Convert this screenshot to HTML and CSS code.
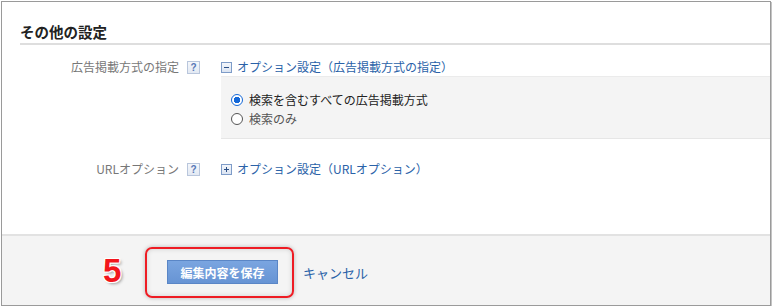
FILE: index.html
```html
<!DOCTYPE html>
<html lang="ja">
  <head>
    <meta charset="UTF-8" />
    <meta name="viewport" content="width=device-width, initial-scale=1.0" />
    <title>その他の設定</title>
    <link rel="stylesheet" href="styles.css">
  </head>
  <body>
    <div class="frame">
      <div class="section">
        <h2 class="section-title">その他の設定</h2>

        <div class="setting-row first">
          <div class="setting-label">
            <span>広告掲載方式の指定</span>
            <span class="help">?</span>
          </div>
          <div class="setting-body">
            <a class="toggle-link" href="#"><span class="toggle minus"></span>オプション設定（広告掲載方式の指定）</a>
            <div class="option-box">
              <label class="radio-line checked"><span class="radio"></span>検索を含むすべての広告掲載方式</label>
              <label class="radio-line"><span class="radio"></span>検索のみ</label>
            </div>
          </div>
        </div>

        <div class="setting-row second">
          <div class="setting-label">
            <span>URLオプション</span>
            <span class="help">?</span>
          </div>
          <div class="setting-body">
            <a class="toggle-link" href="#"><span class="toggle plus"></span>オプション設定（URLオプション）</a>
          </div>
        </div>
      </div>

      <div class="footer">
        <span class="step-number">5</span>
        <div class="highlight">
          <button class="save-button">編集内容を保存</button>
        </div>
        <a class="cancel-link" href="#">キャンセル</a>
      </div>
    </div>
  </body>
</html>
```

FILE: styles.css
```css
/* General Page Styling */
body {
  margin: 0;
  font-family: "Noto Sans CJK JP", "Noto Sans", sans-serif;
  background-color: #ffffff;
  color: #333333;
}

.frame {
  width: 768px;
  height: 303px;
  margin: 1px 0 0 1px;
  border: 1px solid #9a9a9a;
  box-shadow: 1px 1px 0 #c4c4c4;
  display: flex;
  flex-direction: column;
  overflow: hidden;
}

.section {
  flex: 1;
  padding-left: 18px;
}

.section-title {
  margin: 0;
  padding: 20px 0 1px 0;
  font-size: 14.5px;
  line-height: 20px;
  font-weight: bold;
  color: #222222;
  border-bottom: 2px solid #dedede;
}

/* Setting rows */
.setting-row {
  display: flex;
  font-size: 12px;
  line-height: 18px;
}

.setting-row.first {
  margin-top: 13px;
}

.setting-row.second {
  margin-top: 21px;
}

.setting-label {
  width: 180px;
  display: flex;
  justify-content: flex-end;
  align-items: center;
  height: 18px;
  color: #777777;
}

.help {
  width: 11px;
  height: 11px;
  margin-left: 8px;
  border: 1px solid #b9c6dc;
  background: linear-gradient(#f4f7fb, #e3e9f3);
  color: #5677b5;
  font-family: "Liberation Sans", sans-serif;
  font-size: 10px;
  font-weight: bold;
  line-height: 11px;
  text-align: center;
}

.setting-body {
  flex: 1;
  margin-left: 21px;
}

.toggle-link {
  display: flex;
  align-items: center;
  color: #2a62a8;
  text-decoration: none;
  height: 18px;
}

.toggle {
  position: relative;
  width: 9px;
  height: 9px;
  margin-right: 5px;
  border: 1px solid #7e9cc8;
  background: linear-gradient(#f3f6fb, #dbe4f2);
}

.toggle::before,
.toggle.plus::after {
  content: "";
  position: absolute;
  background-color: #2b4f86;
}

.toggle::before {
  left: 2px;
  top: 4px;
  width: 5px;
  height: 1px;
}

.toggle.plus::after {
  left: 4px;
  top: 2px;
  width: 1px;
  height: 5px;
}

/* Option box */
.option-box {
  margin-top: 0;
  padding: 13px 0 10px 10px;
  background-color: #f4f4f4;
  border-top: 1px solid #ebebeb;
  border-bottom: 1px solid #e6e6e6;
}

.radio-line {
  display: flex;
  align-items: center;
  height: 19px;
  color: #555555;
}

.radio-line.checked {
  color: #222222;
}

.radio {
  box-sizing: border-box;
  width: 12px;
  height: 12px;
  margin-right: 6px;
  border: 1.5px solid #555555;
  border-radius: 50%;
  background-color: #ffffff;
}

.radio-line.checked .radio {
  border-color: #1468d8;
  background: radial-gradient(circle, #1468d8 0 3px, #ffffff 3.5px);
}

/* Footer */
.footer {
  height: 69px;
  display: flex;
  align-items: center;
  background-color: #f4f4f4;
  border-top: 2px solid #e2e2e2;
  padding-left: 101px;
}

.step-number {
  width: 23px;
  font-family: "Liberation Sans", sans-serif;
  font-size: 33px;
  font-weight: bold;
  line-height: 30px;
  color: #f2161c;
  text-shadow:
    -1px -1px 0 #ffffff, 1px -1px 0 #ffffff,
    -1px 1px 0 #ffffff, 1px 1px 0 #ffffff,
    2px 2px 3px rgba(0, 0, 0, 0.35);
}

.highlight {
  box-sizing: border-box;
  width: 149px;
  height: 51px;
  margin-left: 19px;
  margin-top: 3px;
  display: flex;
  align-items: center;
  padding-left: 20px;
  border: 2px solid #ee1c24;
  border-radius: 7px;
  box-shadow: 0 0 4px rgba(0, 0, 0, 0.25), inset 0 0 5px rgba(0, 0, 0, 0.15);
}

.save-button {
  width: 111px;
  height: 24px;
  padding: 0;
  border: 1px solid #5a86c6;
  background: linear-gradient(#7aa5e0, #6794d4);
  color: #ffffff;
  font-family: "Noto Sans CJK JP", sans-serif;
  font-size: 12px;
  font-weight: bold;
  cursor: pointer;
}

.cancel-link {
  margin-left: 9px;
  margin-top: 3px;
  font-size: 13px;
  color: #2a62a8;
  text-decoration: none;
}
```
